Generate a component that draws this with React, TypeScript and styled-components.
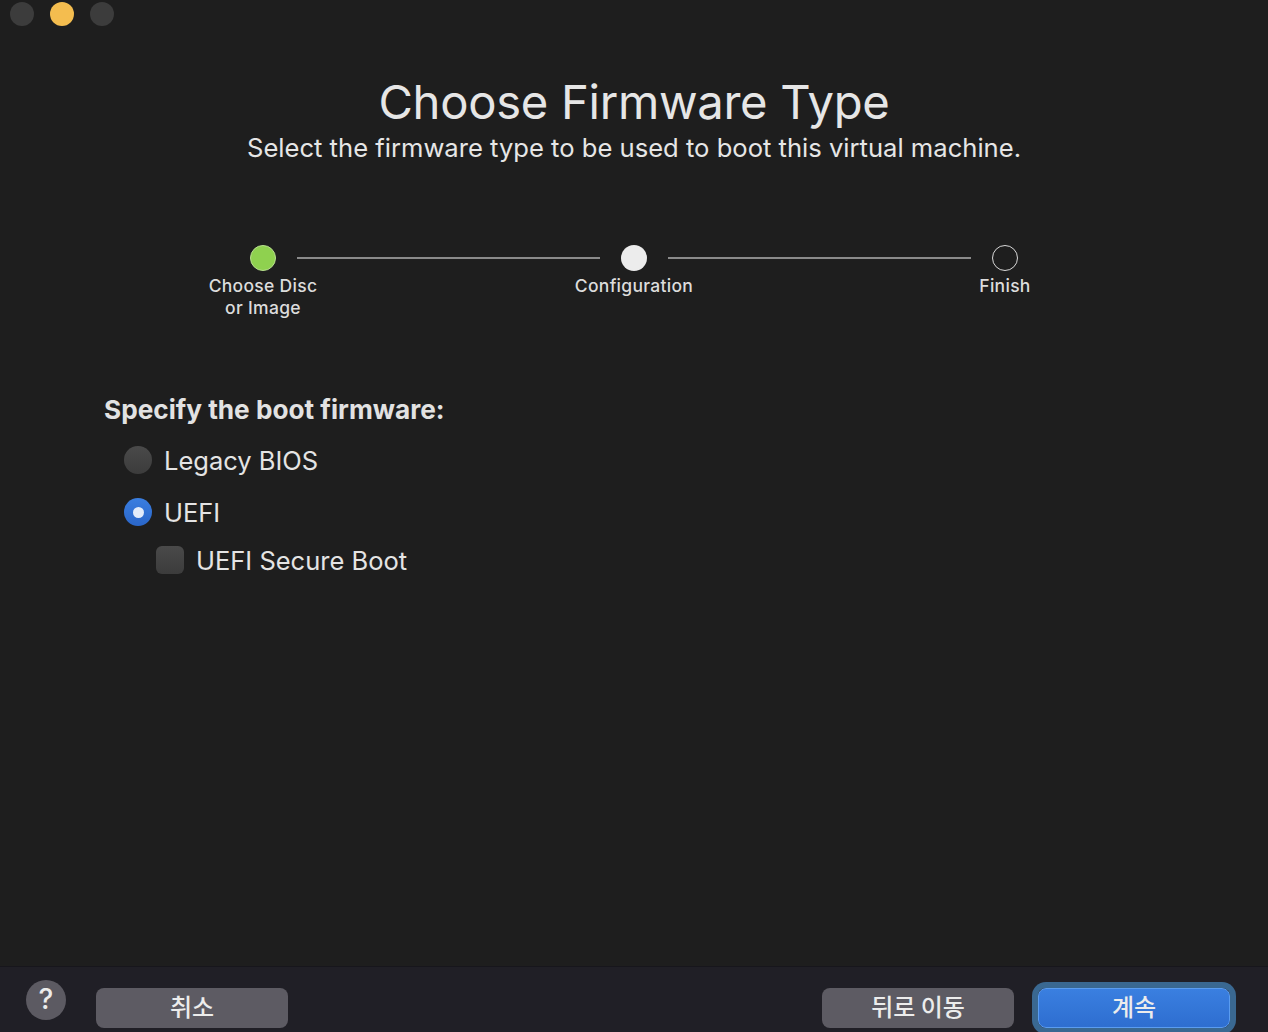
import React from "react";
import styled, { createGlobalStyle } from "styled-components";

const Global = createGlobalStyle`
  html, body { margin: 0; padding: 0; background: #1e1e1e; }
  body { font-family: Inter, "Noto Sans", "Noto Sans CJK KR", sans-serif; color: #e4e4e4; }
  * { box-sizing: border-box; }
`;

const Window = styled.div`
  width: 1268px;
  height: 1032px;
  display: flex;
  flex-direction: column;
  background: #1e1e1e;
  overflow: hidden;
`;

const TitleBar = styled.div`
  height: 28px;
  display: flex;
  align-items: center;
  gap: 16px;
  padding-left: 10px;
`;

const Light = styled.span<{ $c: string }>`
  width: 24px;
  height: 24px;
  border-radius: 50%;
  background: ${(p) => p.$c};
`;

const Main = styled.div`
  flex: 1;
  display: flex;
  flex-direction: column;
`;

const Header = styled.div`
  display: flex;
  flex-direction: column;
  align-items: center;
  padding-top: 44px;
`;

const Title = styled.h1`
  margin: 0;
  font-size: 47.2px;
  font-weight: 400;
  line-height: 60px;
  color: #e6e6e6;
  letter-spacing: -0.3px;
`;

const Subtitle = styled.div`
  font-size: 25.6px;
  line-height: 32px;
  color: #e6e6e6;
`;

const Stepper = styled.div`
  display: flex;
  align-items: flex-start;
  margin: 81px 0 0 199px;
  width: 870px;
`;

const Step = styled.div`
  width: 128px;
  display: flex;
  flex-direction: column;
  align-items: center;
`;

const Dot = styled.span<{ $kind: "done" | "current" | "todo" }>`
  width: 26px;
  height: 26px;
  border-radius: 50%;
  background: ${(p) =>
    p.$kind === "done" ? "#8fd14f" : p.$kind === "current" ? "#ececec" : "transparent"};
  border: ${(p) => (p.$kind === "todo" ? "1.5px solid #d8d8d8" : p.$kind === "done" ? "1px solid #b9e08f" : "none")};
`;

const StepLabel = styled.div`
  margin-top: 4px;
  font-size: 17.5px;
  font-weight: 500;
  line-height: 22px;
  letter-spacing: 0.3px;
  text-align: center;
  color: #dcdcdc;
  white-space: nowrap;
`;

const Line = styled.div`
  flex: 1;
  height: 2px;
  background: #8a8a8a;
  margin: 12px -30px 0;
`;

const Form = styled.div`
  margin: 75px 0 0 104px;
  display: flex;
  flex-direction: column;
`;

const Heading = styled.div`
  font-size: 26.2px;
  font-weight: 700;
  color: #e2e2e2;
  line-height: 32px;
  margin-bottom: 17px;
`;

const Option = styled.label<{ $indent?: number; $after: number }>`
  display: flex;
  align-items: center;
  gap: 12px;
  height: 34px;
  margin-left: ${(p) => p.$indent ?? 20}px;
  margin-bottom: ${(p) => p.$after}px;
  font-size: 25.5px;
  color: #e4e4e4;
`;

const Radio = styled.span<{ $on?: boolean }>`
  width: 28px;
  height: 28px;
  border-radius: 50%;
  display: flex;
  align-items: center;
  justify-content: center;
  background: ${(p) => (p.$on ? "linear-gradient(#3a7ee0, #2a66c9)" : "linear-gradient(#4a4a4a, #3c3c3c)")};
  &::after {
    content: "";
    display: ${(p) => (p.$on ? "block" : "none")};
    width: 11px;
    height: 11px;
    border-radius: 50%;
    background: #e3ecfa;
  }
`;

const Check = styled.span`
  width: 28px;
  height: 28px;
  border-radius: 6px;
  background: linear-gradient(#4a4a4a, #3c3c3c);
`;

const Footer = styled.div`
  height: 66px;
  background: #201f26;
  border-top: 1px solid #17161c;
  display: flex;
  align-items: flex-start;
  padding: 21px 0 0 26px;
`;

const Help = styled.span`
  width: 40px;
  height: 40px;
  margin-top: -8px;
  border-radius: 50%;
  background: #5c5a62;
  color: #ececec;
  font-size: 28px;
  font-weight: 500;
  padding-bottom: 2px;
  display: flex;
  align-items: center;
  justify-content: center;
`;

const Button = styled.button<{ $primary?: boolean }>`
  width: 192px;
  height: 40px;
  border-radius: 8px;
  border: ${(p) => (p.$primary ? "1px solid #5a9cf0" : "none")};
  background: ${(p) => (p.$primary ? "linear-gradient(#3a7fe0, #2e6ed0)" : "#5d5b63")};
  color: #ececec;
  font-family: "Noto Sans CJK KR", sans-serif;
  font-size: 24px;
  font-weight: 500;
  display: flex;
  align-items: center;
  justify-content: center;
  padding: 0 0 6px;
  box-shadow: ${(p) => (p.$primary ? "0 0 0 6px #3a6891" : "none")};
`;

const Spacer = styled.div`
  flex: 1;
`;

const Group = styled.div<{ $gap: number; $ml?: number; $mr?: number }>`
  display: flex;
  gap: ${(p) => p.$gap}px;
  margin-left: ${(p) => p.$ml ?? 0}px;
  margin-right: ${(p) => p.$mr ?? 0}px;
`;

export default function App() {
  return (
    <Window>
      <Global />
      <TitleBar>
        <Light $c="#3c3c3c" />
        <Light $c="#f4bd4f" />
        <Light $c="#3c3c3c" />
      </TitleBar>
      <Main>
        <Header>
          <Title>Choose Firmware Type</Title>
          <Subtitle>Select the firmware type to be used to boot this virtual machine.</Subtitle>
        </Header>
        <Stepper>
          <Step>
            <Dot $kind="done" />
            <StepLabel>
              Choose Disc
              <br />
              or Image
            </StepLabel>
          </Step>
          <Line />
          <Step>
            <Dot $kind="current" />
            <StepLabel>Configuration</StepLabel>
          </Step>
          <Line />
          <Step>
            <Dot $kind="todo" />
            <StepLabel>Finish</StepLabel>
          </Step>
        </Stepper>
        <Form>
          <Heading>Specify the boot firmware:</Heading>
          <Option $after={18}>
            <Radio />
            Legacy BIOS
          </Option>
          <Option $after={14}>
            <Radio $on />
            UEFI
          </Option>
          <Option $indent={52} $after={0}>
            <Check />
            UEFI Secure Boot
          </Option>
        </Form>
      </Main>
      <Footer>
        <Help>?</Help>
        <Group $gap={0} $ml={30}>
          <Button>취소</Button>
        </Group>
        <Spacer />
        <Group $gap={24} $mr={38}>
          <Button>뒤로 이동</Button>
          <Button $primary>계속</Button>
        </Group>
      </Footer>
    </Window>
  );
}
